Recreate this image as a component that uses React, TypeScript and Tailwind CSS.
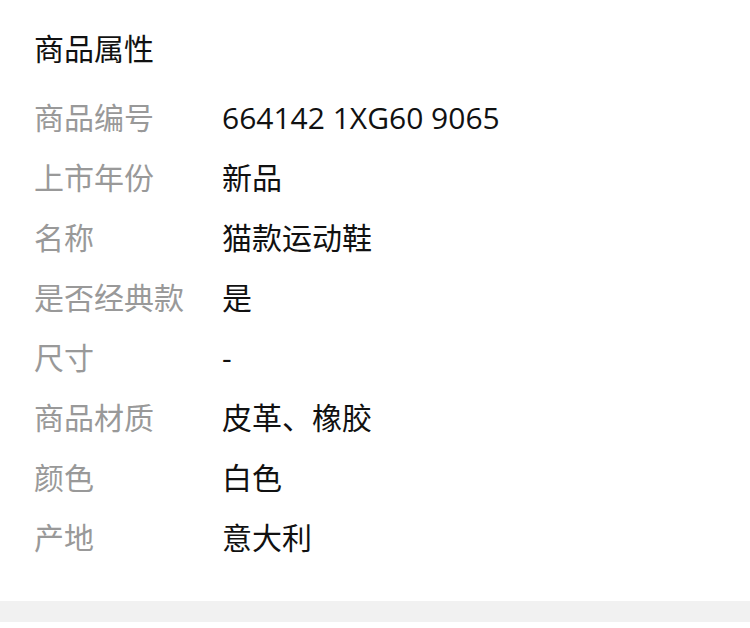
import React from 'react';

const attrs: [string, string][] = [
  ['商品编号', '664142 1XG60 9065'],
  ['上市年份', '新品'],
  ['名称', '猫款运动鞋'],
  ['是否经典款', '是'],
  ['尺寸', '-'],
  ['商品材质', '皮革、橡胶'],
  ['颜色', '白色'],
  ['产地', '意大利'],
];

const App: React.FC = () => {
  return (
    <div
      className="w-[750px] bg-white"
      style={{ fontFamily: '"Open Sans", "Noto Sans CJK SC", sans-serif' }}
    >
      <div className="pl-[34px] pt-[29px] pb-[34px]">
        <h2 className="text-[30px] leading-[40px] text-[#111]">商品属性</h2>
        <div className="mt-[18px]">
          {attrs.map(([label, value]) => (
            <div key={label} className="flex h-[60px] items-center text-[30px]">
              <span className="w-[188px] text-[#999]">{label}</span>
              <span className="text-[#111]">{value}</span>
            </div>
          ))}
        </div>
      </div>
      <div className="h-[21px] bg-[#f1f1f1]" />
      <div className="h-[7px] bg-white" />
    </div>
  );
};

export default App;
